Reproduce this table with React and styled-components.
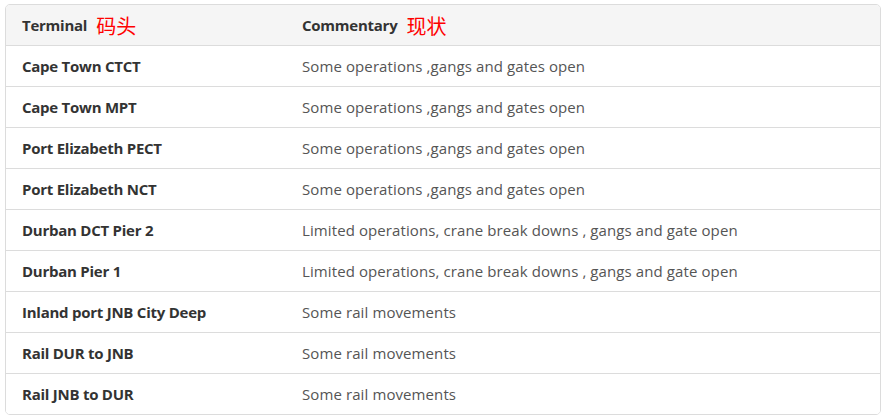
import styled, { createGlobalStyle } from "styled-components";

const GlobalStyle = createGlobalStyle`
  html, body { margin: 0; padding: 0; background: #fff; }
  body { font-family: "Open Sans", "Noto Sans", sans-serif; }
`;

const rows = [
  ["Cape Town CTCT", "Some operations ,gangs and gates open"],
  ["Cape Town MPT", "Some operations ,gangs and gates open"],
  ["Port Elizabeth PECT", "Some operations ,gangs and gates open"],
  ["Port Elizabeth NCT", "Some operations ,gangs and gates open"],
  ["Durban DCT Pier 2", "Limited operations, crane break downs , gangs and gate open"],
  ["Durban Pier 1", "Limited operations, crane break downs , gangs and gate open"],
  ["Inland port JNB City Deep", "Some rail movements"],
  ["Rail DUR to JNB", "Some rail movements"],
  ["Rail JNB to DUR", "Some rail movements"],
];

function App() {
  return (
    <Page>
      <GlobalStyle />
      <Table>
        <Row header>
          <Cell head>Terminal<Cn>码头</Cn></Cell>
          <Cell head>Commentary<Cn>现状</Cn></Cell>
        </Row>
        {rows.map(([terminal, comment], idx) => (
          <Row key={terminal} last={idx === rows.length - 1}>
            <Cell head>{terminal}</Cell>
            <Cell>{comment}</Cell>
          </Row>
        ))}
      </Table>
    </Page>
  );
}

export default App;

const Page = styled.div`
  padding: 4px 6px 0 5px;
`;

const Table = styled.div`
  border: 1px solid #dcdcdc;
  border-radius: 5px;
  overflow: hidden;
`;

const Row = styled.div`
  display: grid;
  grid-template-columns: 280px 1fr;
  height: 40px;
  background: ${props => props.header ? "#f5f5f5" : "#fff"};
  border-bottom: ${props => props.last ? "none" : "1px solid #dcdcdc"};
`;

const Cell = styled.div`
  display: flex;
  align-items: center;
  padding-left: 16px;
  font-size: 15px;
  font-weight: ${props => props.head ? 700 : 400};
  letter-spacing: ${props => props.head ? "-0.25px" : "0.1px"};
  color: ${props => props.head ? "#333" : "#555"};
  white-space: nowrap;
`;

const Cn = styled.span`
  margin-left: 9px;
  font-family: "Noto Sans CJK SC", sans-serif;
  font-weight: 400;
  font-size: 20px;
  letter-spacing: 0;
  color: #ff0000;
`;
